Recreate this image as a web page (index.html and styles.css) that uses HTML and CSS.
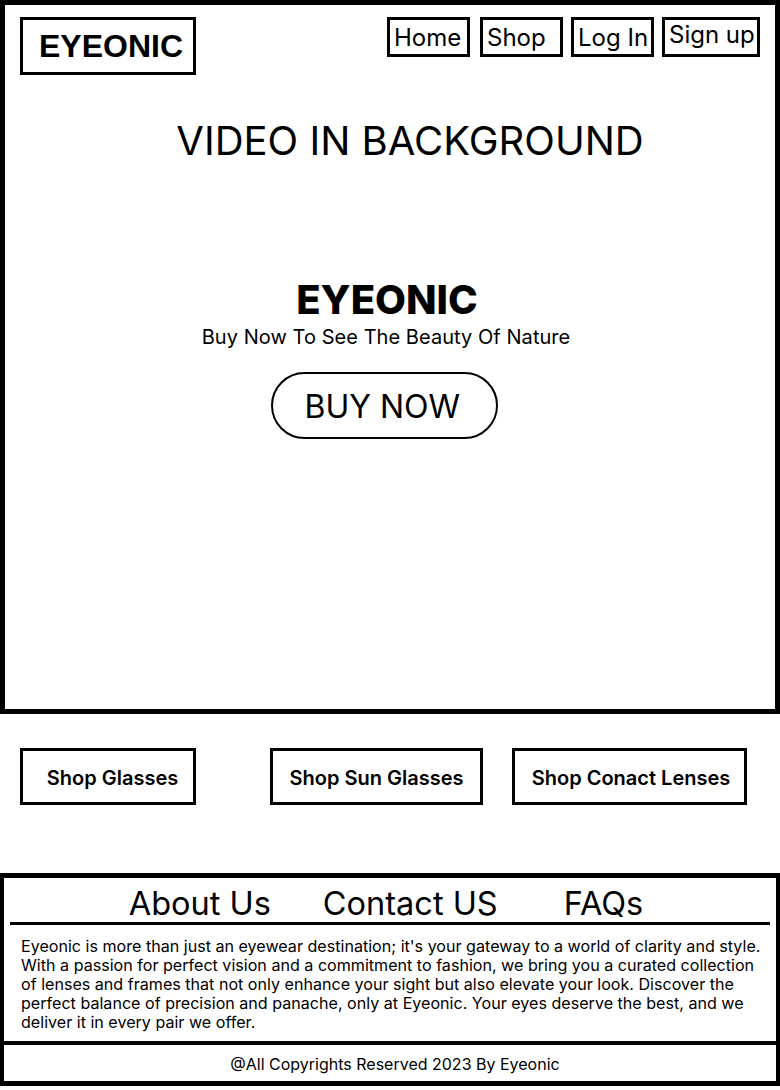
FILE: index.html
```html
<!DOCTYPE html>
<html lang="en">
<head>
<meta charset="utf-8">
<title>Eyeonic</title>
<link rel="stylesheet" href="styles.css">
</head>
<body>
<section class="hero">
  <header class="topbar">
    <div class="logo">EYEONIC</div>
    <nav class="nav">
      <a class="nav-link">Home</a>
      <a class="nav-link nav-gap">Shop</a>
      <a class="nav-link">Log In</a>
      <a class="nav-link nav-signup">Sign up</a>
    </nav>
  </header>
  <h2 class="video-note">VIDEO IN BACKGROUND</h2>
  <div class="hero-center">
    <h1 class="brand">EYEONIC</h1>
    <p class="tagline">Buy Now To See The Beauty Of Nature</p>
    <a class="buy-btn">BUY NOW</a>
  </div>
</section>

<section class="shop-row">
  <a class="shop-btn shop-glasses">Shop Glasses</a>
  <a class="shop-btn shop-sun">Shop Sun Glasses</a>
  <a class="shop-btn shop-lenses">Shop Conact Lenses</a>
</section>

<footer class="footer">
  <div class="footer-main">
    <nav class="footer-links">
      <a class="footer-link">About Us</a>
      <a class="footer-link">Contact US</a>
      <a class="footer-link footer-faq">FAQs</a>
    </nav>
    <p class="about">Eyeonic is more than just an eyewear destination; it's your gateway to a world of clarity and style. With a passion for perfect vision and a commitment to fashion, we bring you a curated collection of lenses and frames that not only enhance your sight but also elevate your look. Discover the perfect balance of precision and panache, only at Eyeonic. Your eyes deserve the best, and we deliver it in every pair we offer.</p>
  </div>
  <div class="copyright">@All Copyrights Reserved 2023 By Eyeonic</div>
</footer>
</body>
</html>
```

FILE: styles.css
```css
* { box-sizing: border-box; }

html, body {
  margin: 0;
  padding: 0;
  background: #fff;
  color: #000;
  font-family: Inter, "Noto Sans", sans-serif;
}

a { color: #000; text-decoration: none; }
h1, h2, p { margin: 0; font-weight: normal; }

/* HERO */
.hero {
  width: 780px;
  height: 714px;
  border: 5px solid #000;
  padding: 12px 15px 0 15px;
}

.topbar {
  display: flex;
  justify-content: space-between;
  align-items: flex-start;
}

.logo {
  width: 176px;
  height: 58px;
  border: 3px solid #000;
  display: flex;
  align-items: center;
  justify-content: center;
  font-family: "Liberation Sans", Arial, sans-serif;
  font-weight: 700;
  font-size: 32px;
  padding-left: 6px;
  padding-top: 1px;
}

.nav {
  display: flex;
  gap: 8px;
}

.nav-link {
  width: 83px;
  height: 40px;
  border: 3px solid #000;
  font-size: 24px;
  line-height: 35px;
  padding-left: 4px;
  white-space: nowrap;
}

.nav-gap { margin-left: 2px; }

.nav-signup {
  width: 98px;
  line-height: 30px;
}

.video-note {
  margin-top: 42px;
  font-size: 40px;
  line-height: 48px;
  text-align: center;
  padding-left: 40px;
}

.hero-center {
  margin-top: 111px;
  display: flex;
  flex-direction: column;
  align-items: center;
  padding-right: 6px;
}

.brand {
  font-size: 40px;
  font-weight: 800;
  line-height: 48px;
}

.tagline {
  font-size: 20px;
  line-height: 24px;
  margin-top: 1px;
  letter-spacing: 0.05px;
  padding-right: 2px;
}

.buy-btn {
  margin-top: 23px;
  margin-right: 6px;
  width: 227px;
  height: 67px;
  border: 2px solid #000;
  border-radius: 34px;
  display: flex;
  align-items: center;
  padding-left: 32px;
  font-size: 32px;
  padding-top: 2px;
}

/* SHOP ROW */
.shop-row {
  display: flex;
  margin-top: 34px;
  padding-left: 20px;
}

.shop-btn {
  height: 57px;
  border: 3px solid #000;
  display: flex;
  align-items: center;
  justify-content: center;
  font-weight: 600;
  font-size: 20px;
  white-space: nowrap;
  padding-top: 2px;
}

.shop-glasses { width: 176px; padding-left: 9px; }
.shop-sun { width: 213px; margin-left: 74px; }
.shop-lenses { width: 235px; margin-left: 29px; padding-left: 3px; }

/* FOOTER */
.footer {
  margin-top: 68px;
  width: 780px;
  border-style: solid;
  border-color: #000;
  border-width: 5px 4px;
}

.footer-main {
  padding: 7px 6px 0 6px;
  height: 163px;
}

.footer-links {
  display: flex;
  justify-content: center;
  border-bottom: 3px solid #000;
  padding-right: 8px;
}

.footer-link {
  font-size: 32.5px;
  line-height: 37px;
  margin: 0 26px;
}

.footer-faq { margin-left: 40px; }

.about {
  padding: 12px 4px 0 11px;
  font-size: 16.1px;
  line-height: 19px;
}

.copyright {
  border-top: 4px solid #000;
  height: 40px;
  display: flex;
  align-items: center;
  justify-content: center;
  font-size: 16px;
  padding-left: 10px;
  padding-top: 2px;
}
```
